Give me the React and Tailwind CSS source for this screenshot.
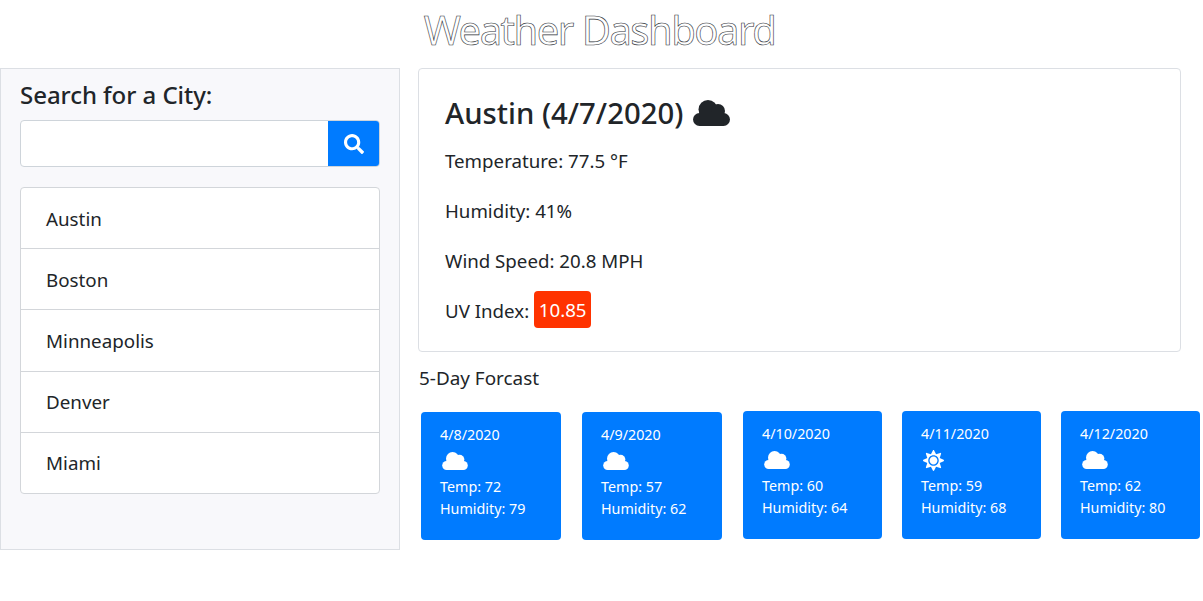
import React from 'react';
import { FaSearch, FaSun } from 'react-icons/fa';

const cities = ['Austin', 'Boston', 'Minneapolis', 'Denver', 'Miami'];

const forecast = [
  { date: '4/8/2020', temp: 72, humidity: 79, box: 'ml-[3px] w-[140px] mt-0', icon: 'cloud' },
  { date: '4/9/2020', temp: 57, humidity: 62, box: 'ml-[21px] w-[140px] mt-0', icon: 'cloud' },
  { date: '4/10/2020', temp: 60, humidity: 64, box: 'ml-[21px] w-[139px] -mt-px', icon: 'cloud' },
  { date: '4/11/2020', temp: 59, humidity: 68, box: 'ml-[20px] w-[139px] -mt-px', icon: 'sun' },
  { date: '4/12/2020', temp: 62, humidity: 80, box: 'ml-[20px] w-[139px] -mt-px', icon: 'cloud' },
];

const Cloud = ({ className }) => (
  <svg viewBox="0 0 37 26" fill="currentColor" className={className}>
    <circle cx="6.5" cy="19.5" r="6.5" />
    <circle cx="15" cy="9.5" r="9.5" />
    <circle cx="25" cy="11" r="7" />
    <circle cx="30.5" cy="19.5" r="6.5" />
    <rect x="6.5" y="12" width="24" height="14" />
  </svg>
);

const App = () => {
  return (
    <div className="w-[1203px] h-[601px] overflow-hidden bg-white text-[#212529] font-['Noto_Sans',sans-serif]">
      <h1 className="h-[68px] pt-[6px] pr-[4px] text-center text-[40px] leading-[48px] font-normal text-white [-webkit-text-stroke:0.6px_#30343a] tracking-[-1.5px]">
        Weather Dashboard
      </h1>

      <div className="flex items-start">
        <aside className="w-[400px] h-[482px] shrink-0 border border-[#dcdfe4] bg-[#f8f8fb] px-[19px] pt-[8px]">
          <h2 className="text-[24px] leading-[36px] font-medium tracking-[-0.05px]">Search for a City:</h2>
          <div className="flex h-[47px] mt-[7px] rounded overflow-hidden border border-[#ced4da] bg-white">
            <input className="flex-1 min-w-0 outline-none" aria-label="City" />
            <button className="w-[52px] -my-px -mr-px flex items-center justify-center bg-[#007bff] text-white">
              <FaSearch size={20} />
            </button>
          </div>
          <ul className="mt-[20px] rounded border border-[#d3d6da] bg-white">
            {cities.map((city, i) => (
              <li
                key={city}
                className={`h-[61.2px] pl-[25px] pt-[1px] flex items-center text-[18.8px] ${i > 0 ? 'border-t border-[#d3d6da]' : '-mb-px'}`}
              >
                {city}
              </li>
            ))}
          </ul>
        </aside>

        <main className="ml-[18px] flex-1 min-w-0">
          <section className="w-[763px] h-[284px] rounded border border-[#dcdfe4] pl-[26px] pt-[24px]">
            <h2 className="flex items-center text-[29.3px] leading-[40px] font-medium">
              Austin (4/7/2020)
              <Cloud className="ml-[10px] w-[37px] h-[26px]" />
            </h2>
            <p className="mt-[13px] text-[18.7px] leading-[30px]">Temperature: 77.5 °F</p>
            <p className="mt-[20px] text-[18.7px] leading-[30px]">Humidity: 41%</p>
            <p className="mt-[20px] text-[18.7px] leading-[30px]">Wind Speed: 20.8 MPH</p>
            <p className="mt-[15px] h-[37px] flex items-center text-[18.7px] leading-[30px]">
              <span className="mt-[2px]">UV Index:</span>
              <span className="ml-[5px] w-[57px] rounded bg-[#ff3300] text-white h-[37px] flex items-center justify-center">10.85</span>
            </p>
          </section>

          <h3 className="ml-px mt-[11px] text-[18.9px] leading-[30px]">5-Day Forcast</h3>

          <div className="flex mt-[19px]">
            {forecast.map(({ date, temp, humidity, box, icon }) => (
              <div
                key={date}
                className={`${box} h-[128px] rounded bg-[#007bff] text-white pl-[19px] pt-[12px] text-[14.3px] leading-[22px]`}
              >
                <div>{date}</div>
                <div className="h-[30px] pl-[2px] flex items-center">
                  {icon === 'sun' ? <FaSun size={21} /> : <Cloud className="w-[26px] h-[18px]" />}
                </div>
                <div>Temp: {temp}</div>
                <div>Humidity: {humidity}</div>
              </div>
            ))}
          </div>
        </main>
      </div>
    </div>
  );
};

export default App;
